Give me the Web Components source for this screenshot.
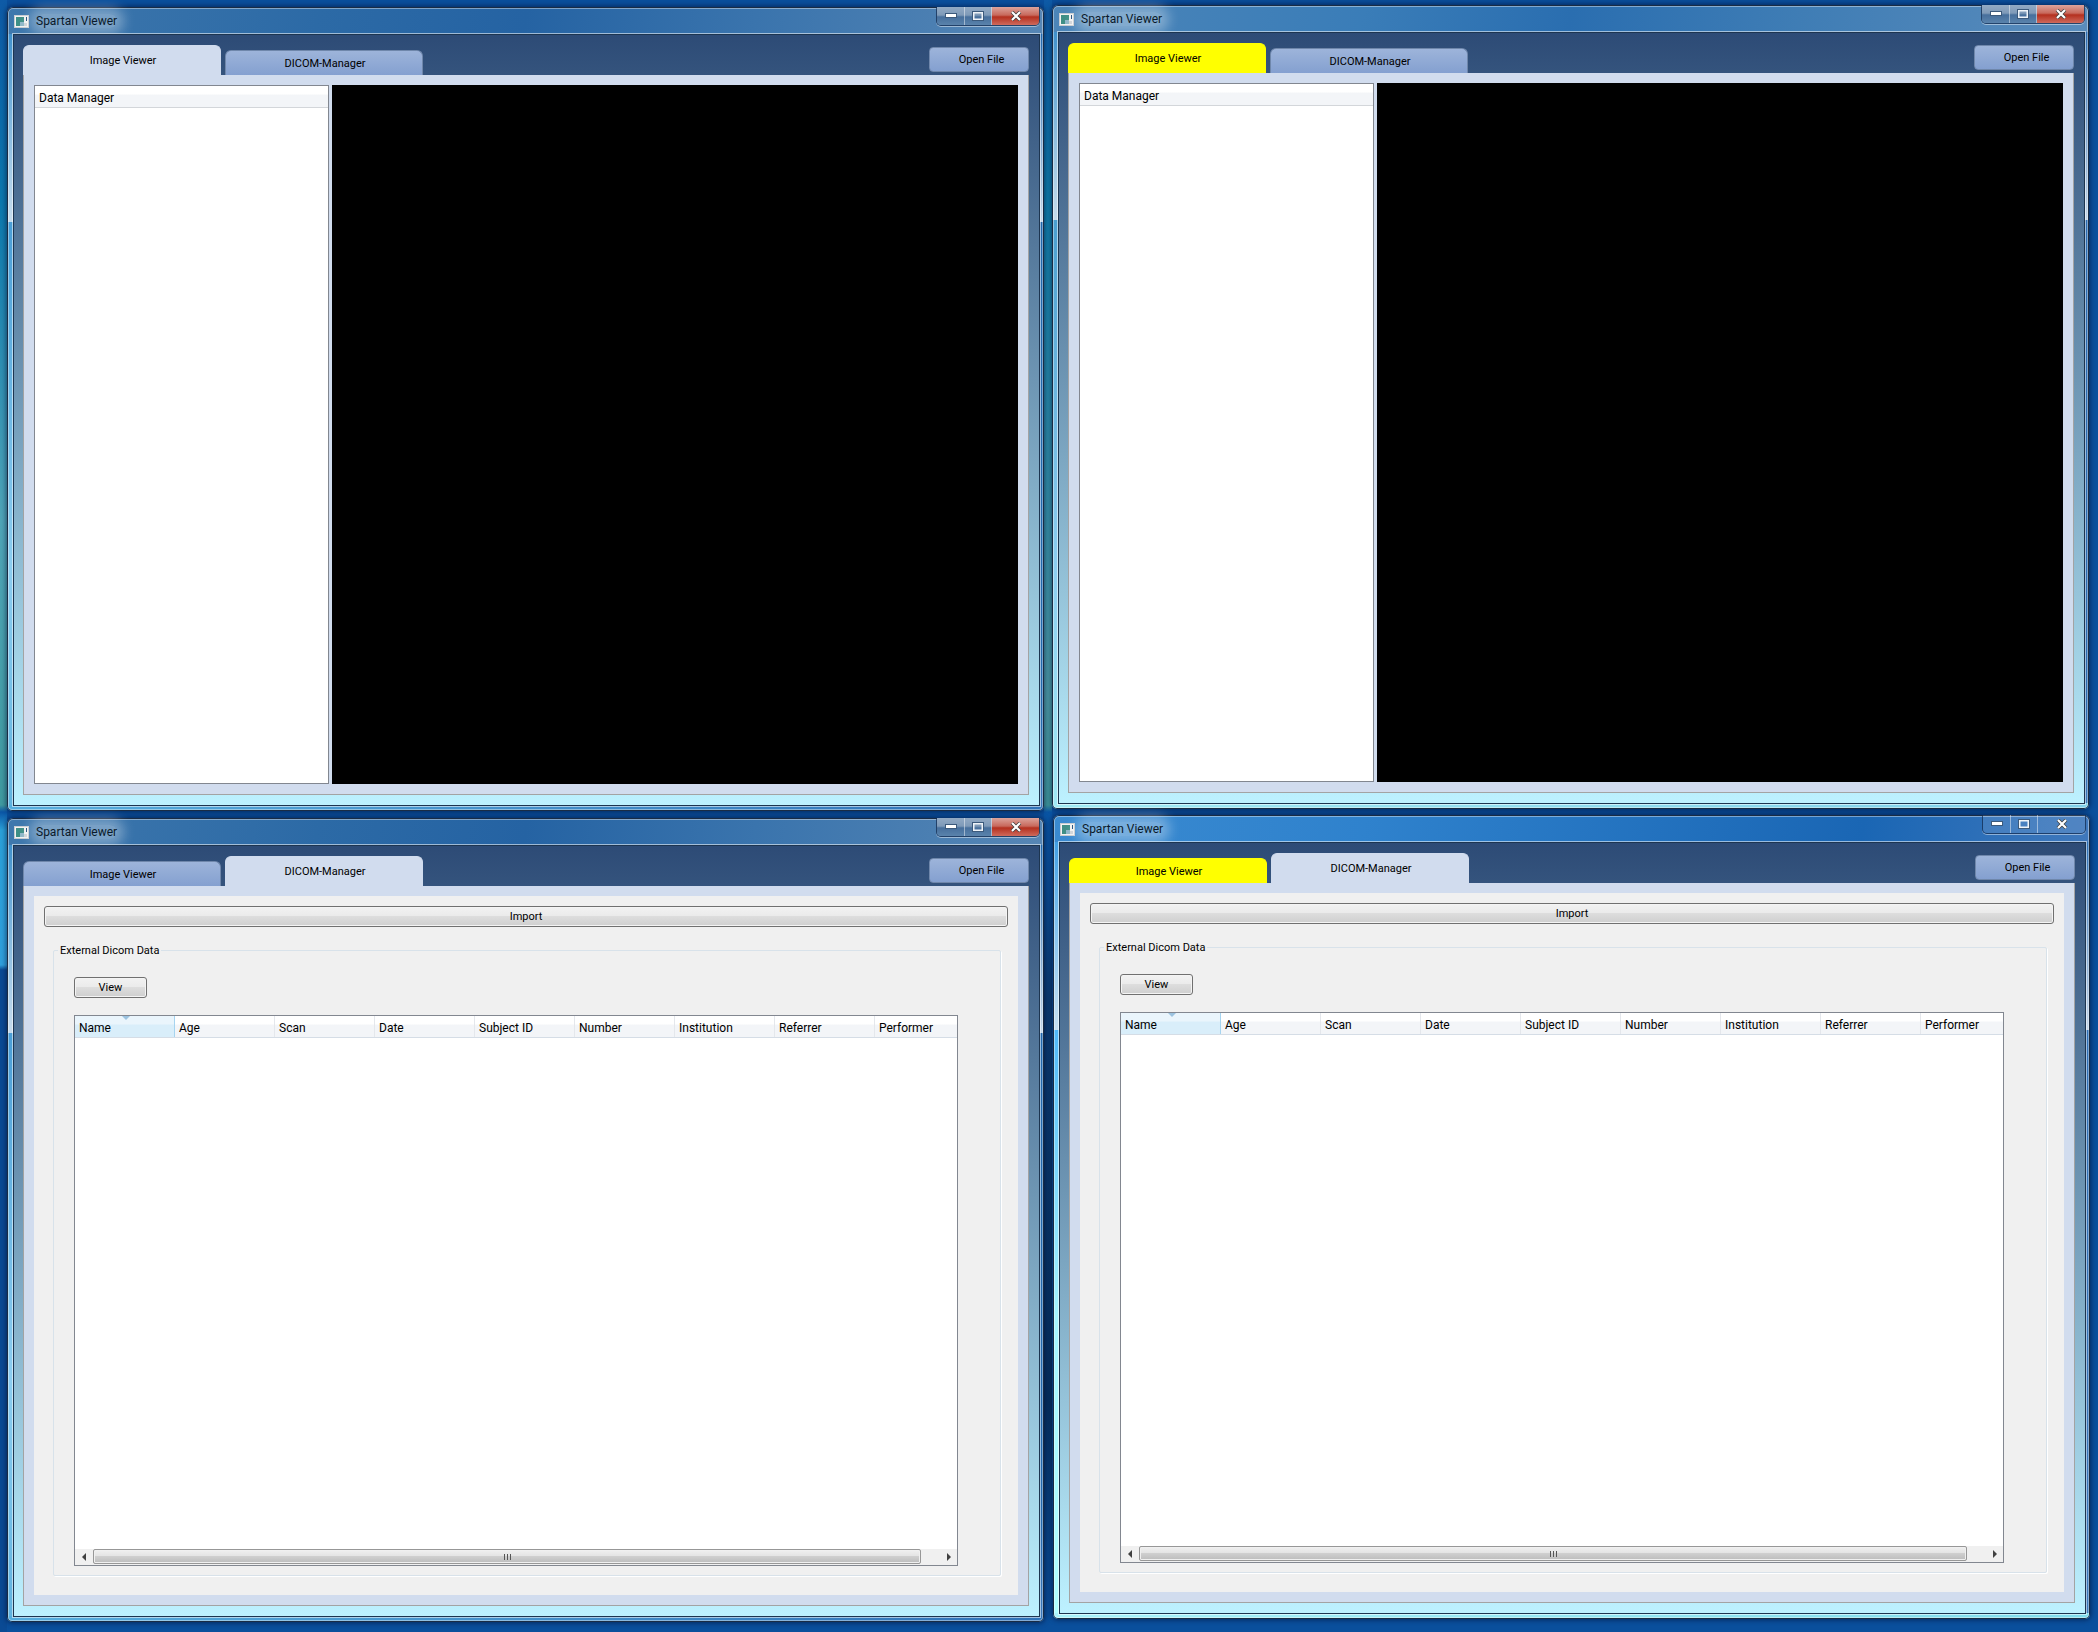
<!DOCTYPE html>
<html>
<head>
<meta charset="utf-8">
<title>Spartan Viewer</title>
<style>
    html, body { margin: 0; padding: 0; }
    body {
        width: 2098px;
        height: 1632px;
        position: relative;
        overflow: hidden;
        font: 12px Roboto, sans-serif;
        color: #000;
        /* desktop wallpaper showing through the gaps between the windows */
        background:
            linear-gradient(#0e5aa6 0, #0b78ae 200px, #4fa5b8 520px, #3f9aa0 805px, #0a55a5 812px, #2aa0d8 830px, #2f9fdc 965px, #0a4a94 970px) 0 0 / 7px 100% no-repeat,
            linear-gradient(#0e5aa6 0, #0f7fae 200px, #4d9ca8 700px, #3f9aa0 805px, #0a55a5 812px, #0b3a70 1000px, #062f5e 1400px, #0a4f9c 1625px) 1044px 0 / 8px 100% no-repeat,
            #0a4f9c;
    }
</style>
</head>
<body>
<spartan-window x="7" y="7" tab="image" frame="a"></spartan-window>
<spartan-window x="1052" y="5" tab="image" frame="b" yellow></spartan-window>
<spartan-window x="7" y="818" tab="dicom" frame="a"></spartan-window>
<spartan-window x="1053" y="815" tab="dicom" frame="c" yellow></spartan-window>

<script>
class WinButtons extends HTMLElement {
    constructor() {
        super();
        this.attachShadow({ mode: 'open' });
    }

    connectedCallback() {
        this.shadowRoot.innerHTML = `
            <style>
                :host {
                    display: flex;
                    height: 18px;
                    border: 1px solid rgba(20, 45, 80, 0.75);
                    border-top: 0;
                    border-radius: 0 0 5px 5px;
                    box-shadow: 0 1px 0 rgba(255, 255, 255, 0.45);
                    overflow: hidden;
                }
                .btn {
                    display: flex;
                    align-items: center;
                    justify-content: center;
                    box-sizing: border-box;
                    border-right: 1px solid rgba(255, 255, 255, 0.45);
                    background: linear-gradient(#92aac4, #7f9ab8 45%, #476f9c 55%, #5a83ac);
                }
                .min { width: 28px; }
                .max { width: 27px; }
                .close { width: 47px; border-right: 0; background: linear-gradient(#dca49c, #c8695c 45%, #b4301f 55%, #cf6a5c); }
                :host([plain]) .btn { background: rgba(255, 255, 255, 0.1); }
                svg { display: block; }
            </style>
            <div class="btn min"><svg width="12" height="6"><rect x="0.5" y="0.5" width="11" height="4" fill="#fff" stroke="#3c5a7c"/></svg></div>
            <div class="btn max"><svg width="12" height="10"><rect x="1.5" y="1.5" width="9" height="7" fill="none" stroke="#eef3f8" stroke-width="2"/><rect x="0.5" y="0.5" width="11" height="9" fill="none" stroke="#3c5a7c"/></svg></div>
            <div class="btn close"><svg width="12" height="10"><path d="M2 1 L10 9 M10 1 L2 9" stroke="#3c3c3c" stroke-width="3.6"/><path d="M2 1 L10 9 M10 1 L2 9" stroke="#fff" stroke-width="2.2"/></svg></div>
        `;
    }
}

class TabButton extends HTMLElement {
    constructor() {
        super();
        this.attachShadow({ mode: 'open' });
    }

    connectedCallback() {
        this.shadowRoot.innerHTML = `
            <style>
                :host {
                    display: flex;
                    align-items: center;
                    justify-content: center;
                    box-sizing: border-box;
                    width: 198px;
                    height: 25px;
                    padding-left: 2px;
                    font-size: 11px;
                    border: 1px solid #6f87ab;
                    border-bottom: 0;
                    border-radius: 6px 6px 0 0;
                    background: linear-gradient(#9db4da, #84a0d0);
                }
                :host([active]) {
                    height: 30px;
                    border-color: #d1dcee;
                    background: #d1dcee;
                }
                :host([yellow]) {
                    border-color: #ffff00;
                    background: #ffff00;
                }
            </style>
            <slot></slot>
        `;
    }
}

class GlossButton extends HTMLElement {
    constructor() {
        super();
        this.attachShadow({ mode: 'open' });
    }

    connectedCallback() {
        this.shadowRoot.innerHTML = `
            <style>
                :host {
                    display: flex;
                    align-items: center;
                    justify-content: center;
                    box-sizing: border-box;
                    height: 21px;
                    font-size: 11px;
                    border: 1px solid #707070;
                    border-radius: 3px;
                    box-shadow: inset 0 0 0 1px #f4f4f4;
                    background: linear-gradient(#f2f2f2, #ebebeb 45%, #dddddd 50%, #cfcfcf);
                }
            </style>
            <slot></slot>
        `;
    }
}

class ScrollBar extends HTMLElement {
    constructor() {
        super();
        this.attachShadow({ mode: 'open' });
    }

    connectedCallback() {
        this.shadowRoot.innerHTML = `
            <style>
                :host {
                    display: flex;
                    flex: none;
                    height: 16px;
                    background: #f0f0f0;
                }
                .end {
                    flex: none;
                    display: flex;
                    align-items: center;
                    justify-content: center;
                }
                .left { width: 18px; }
                .right { width: 36px; padding-left: 19px; box-sizing: border-box; }
                .thumb {
                    flex: 1;
                    box-sizing: border-box;
                    margin-bottom: 1px;
                    display: flex;
                    align-items: center;
                    justify-content: center;
                    border: 1px solid #979797;
                    border-radius: 2px;
                    box-shadow: inset 0 0 0 1px #f0f0f0;
                    background: linear-gradient(#f0f0f0, #e4e4e4 45%, #cfcfcf 50%, #bcbcbc);
                }
                svg { display: block; }
            </style>
            <div class="end left"><svg width="5" height="8"><path d="M4 0 L0 4 L4 8 Z" fill="#404040"/></svg></div>
            <div class="thumb"><svg width="7" height="6"><path d="M0.5 0V6M3.5 0V6M6.5 0V6" stroke="#555"/></svg></div>
            <div class="end right"><svg width="5" height="8"><path d="M1 0 L5 4 L1 8 Z" fill="#404040"/></svg></div>
        `;
    }
}

class StudyTable extends HTMLElement {
    constructor() {
        super();
        this.attachShadow({ mode: 'open' });
    }

    connectedCallback() {
        const columns = ['Name', 'Age', 'Scan', 'Date', 'Subject ID', 'Number', 'Institution', 'Referrer', 'Performer'];
        const cells = columns.map((c, i) => `<div class="cell${i === 0 ? ' sorted' : ''}">${c}</div>`).join('');
        this.shadowRoot.innerHTML = `
            <style>
                :host {
                    display: flex;
                    flex-direction: column;
                    flex: 1;
                    min-height: 0;
                    min-width: 0;
                    box-sizing: border-box;
                    border: 1px solid #828790;
                    background: #fff;
                }
                .header {
                    flex: none;
                    display: flex;
                    height: 22px;
                    overflow: hidden;
                    box-sizing: border-box;
                    border-bottom: 1px solid #d5dde6;
                }
                .cell {
                    flex: none;
                    position: relative;
                    width: 100px;
                    box-sizing: border-box;
                    padding: 5px 0 0 4px;
                    border-right: 1px solid #e4e7ec;
                    background: linear-gradient(#fff 0, #fff 40%, #f3f5f8 41%, #f3f5f8);
                }
                .sorted {
                    border-right: 1px solid #a6d4f0;
                    background: linear-gradient(#eaf5fc 0, #eaf5fc 40%, #d9eefa 41%, #d9eefa);
                }
                .sorted::before {
                    content: '';
                    position: absolute;
                    left: 47px;
                    top: 0;
                    border: 4px solid transparent;
                    border-top-color: #9cc3e0;
                    border-bottom: 0;
                }
                .rows { flex: 1; }
            </style>
            <div class="header">${cells}</div>
            <div class="rows"></div>
            <scroll-bar></scroll-bar>
        `;
    }
}

class ImagePage extends HTMLElement {
    constructor() {
        super();
        this.attachShadow({ mode: 'open' });
    }

    connectedCallback() {
        this.shadowRoot.innerHTML = `
            <style>
                :host {
                    display: flex;
                    flex: 1;
                    gap: 3px;
                    min-height: 0;
                    min-width: 0;
                }
                .tree {
                    flex: none;
                    width: 295px;
                    box-sizing: border-box;
                    border: 1px solid #828790;
                    background: #fff;
                }
                .head {
                    height: 22px;
                    box-sizing: border-box;
                    padding: 5px 0 0 4px;
                    border-bottom: 1px solid #d3d6da;
                    background: linear-gradient(#fff 0, #fff 40%, #f3f5f8 41%, #f3f5f8);
                }
                .view { flex: 1; background: #000; }
            </style>
            <div class="tree"><div class="head">Data Manager</div></div>
            <div class="view"></div>
        `;
    }
}

class DicomPage extends HTMLElement {
    constructor() {
        super();
        this.attachShadow({ mode: 'open' });
    }

    connectedCallback() {
        this.shadowRoot.innerHTML = `
            <style>
                :host {
                    display: flex;
                    flex-direction: column;
                    flex: 1;
                    min-height: 0;
                    min-width: 0;
                    box-sizing: border-box;
                    padding: 10px;
                    background: #f0f0f0;
                }
                .group {
                    position: relative;
                    flex: 1;
                    min-height: 0;
                    min-width: 0;
                    display: flex;
                    flex-direction: column;
                    align-items: stretch;
                    box-sizing: border-box;
                    margin: 23px 7px 9px 9px;
                    padding: 26px 42px 9px 20px;
                    border: 1px solid #d8e2ea;
                    border-radius: 2px;
                    box-shadow: 1px 1px 0 #fff;
                }
                .legend {
                    position: absolute;
                    left: 4px;
                    top: -7px;
                    padding: 0 2px;
                    font-size: 11px;
                    background: #f0f0f0;
                }
                .view { width: 73px; margin-bottom: 17px; }
            </style>
            <gloss-button>Import</gloss-button>
            <div class="group">
                <div class="legend">External Dicom Data</div>
                <gloss-button class="view">View</gloss-button>
                <study-table></study-table>
            </div>
        `;
    }
}

// colours of the glass frame: title bar, left side, right side
const FRAMES = {
    a: {
        title: 'linear-gradient(100deg, #3f78ad 0, #2c6aa6 30%, #2563a3 50%, #3a74ad 72%, #5686b5 100%)',
        left: 'linear-gradient(#3f8fcb 0, #4a9ed6 215px, #8ccdf0 560px, #5fb2de 804px)',
        right: 'linear-gradient(#2068ae, #2068ae 700px, #3a78bb)',
        bottom: 'linear-gradient(90deg, #55aede, #2f72b8)'
    },
    b: {
        title: 'linear-gradient(100deg, #4c85b8 0, #3a7db8 30%, #2a6eb0 50%, #3f7db5 72%, #5a8cbc 100%)',
        left: 'linear-gradient(#3f8fcb 0, #4a9fd0 215px, #8ccdf0 560px, #a0e8f4 804px)',
        right: 'linear-gradient(#2a6bb0, #2a6bb0 700px, #3a78bb)',
        bottom: 'linear-gradient(90deg, #a0eaf4, #7fd0ea)'
    },
    c: {
        title: 'linear-gradient(100deg, #3a8ad0 0, #2f82cd 30%, #1a66b4 78%, #3f78bc 100%)',
        left: 'linear-gradient(#3f9be0 0, #50b8f8 215px, #a5f5ff 500px, #b0ffff 804px)',
        right: 'linear-gradient(#2a6eb5, #3a78bb)',
        bottom: 'linear-gradient(90deg, #a8f2fa, #7fdcec)'
    }
};

class SpartanWindow extends HTMLElement {
    constructor() {
        super();
        this.attachShadow({ mode: 'open' });
    }

    connectedCallback() {
        const tab = this.getAttribute('tab');
        const frame = FRAMES[this.getAttribute('frame')];
        const yellow = this.hasAttribute('yellow') ? 'yellow' : '';
        const plain = this.getAttribute('frame') === 'c' ? 'plain' : '';
        const page = tab === 'image' ? '<image-page></image-page>' : '<dicom-page></dicom-page>';
        this.shadowRoot.innerHTML = `
            <style>
                :host {
                    position: absolute;
                    left: ${this.getAttribute('x')}px;
                    top: ${this.getAttribute('y')}px;
                    width: 1037px;
                    height: 804px;
                    box-sizing: border-box;
                    display: flex;
                    flex-direction: column;
                    padding: 0 4px 5px 6px;
                    border-radius: 6px 6px 5px 5px;
                    background:
                        ${frame.title} 0 0 / 100% 27px no-repeat,
                        linear-gradient(rgba(215, 228, 240, 0) 27px, rgba(215, 228, 240, 0.88) 215px, transparent 215px),
                        ${frame.bottom} 0 100% / 100% 6px no-repeat,
                        ${frame.left} 0 0 / 50% 100% no-repeat,
                        ${frame.right} 100% 0 / 50% 100% no-repeat;
                    box-shadow: 0 0 5px 1px rgba(0, 10, 40, 0.55), inset 0 0 0 1px #1a2c44, inset 0 0 0 2px rgba(255, 255, 255, 0.4);
                }
                .title {
                    position: relative;
                    flex: none;
                    height: 27px;
                    display: flex;
                    align-items: center;
                    gap: 7px;
                    padding: 1px 0 0 1px;
                    box-sizing: border-box;
                }
                .caption {
                    border-radius: 10px;
                    box-shadow: 0 0 12px 7px rgba(255, 255, 255, 0.32);
                    background: rgba(255, 255, 255, 0.32);
                    line-height: 14px;
                    color: #0b1a2a;
                }
                win-buttons {
                    position: absolute;
                    right: 0;
                    top: 0;
                }
                .client {
                    position: relative;
                    flex: 1;
                    min-height: 0;
                    display: flex;
                    flex-direction: column;
                    border: 1px solid #1d3550;
                    outline: 1px solid rgba(255, 255, 255, 0.55);
                    background: linear-gradient(#2d4b76, #bdf1ff);
                }
                .tabbar {
                    flex: none;
                    height: 40px;
                    display: flex;
                    align-items: flex-end;
                    gap: 4px;
                    padding: 0 10px 0 9px;
                }
                .open {
                    display: flex;
                    align-items: center;
                    justify-content: center;
                    box-sizing: border-box;
                    width: 100px;
                    height: 25px;
                    margin: 0 0 3px auto;
                    padding-left: 5px;
                    font-size: 11px;
                    border: 1px solid #6f87ab;
                    border-radius: 4px;
                    background: linear-gradient(#9db4da, #84a0d0);
                }
                .pane {
                    flex: 1;
                    min-height: 0;
                    display: flex;
                    box-sizing: border-box;
                    margin: 0 10px 10px 9px;
                    padding: 10px;
                    border: 1px solid #a3a3a3;
                    border-top: 0;
                    background: #d1dcee;
                }
            </style>
            <div class="title">
                <svg width="15" height="13" viewBox="0 0 15 13">
                    <rect x="0.5" y="0.5" width="14" height="12" fill="#f2f2f2" stroke="#c8ccd0"/>
                    <rect x="2" y="2" width="8" height="9" fill="#3f8f86"/>
                    <rect x="6" y="7" width="4" height="4" fill="#8fb7c8"/>
                    <rect x="10" y="8" width="3" height="3" fill="#d0d4d8"/>
                    <rect x="12" y="2" width="1" height="4" fill="#1c4a78"/>
                </svg>
                <div class="caption">Spartan Viewer</div>
                <win-buttons ${plain}></win-buttons>
            </div>
            <div class="client">
                <div class="tabbar">
                    <tab-button ${tab === 'image' ? 'active' : ''} ${yellow}>Image Viewer</tab-button>
                    <tab-button ${tab === 'dicom' ? 'active' : ''}>DICOM-Manager</tab-button>
                    <div class="open">Open File</div>
                </div>
                <div class="pane">${page}</div>
            </div>
        `;
    }
}

customElements.define('win-buttons', WinButtons);
customElements.define('tab-button', TabButton);
customElements.define('gloss-button', GlossButton);
customElements.define('scroll-bar', ScrollBar);
customElements.define('study-table', StudyTable);
customElements.define('image-page', ImagePage);
customElements.define('dicom-page', DicomPage);
customElements.define('spartan-window', SpartanWindow);
</script>
</body>
</html>
